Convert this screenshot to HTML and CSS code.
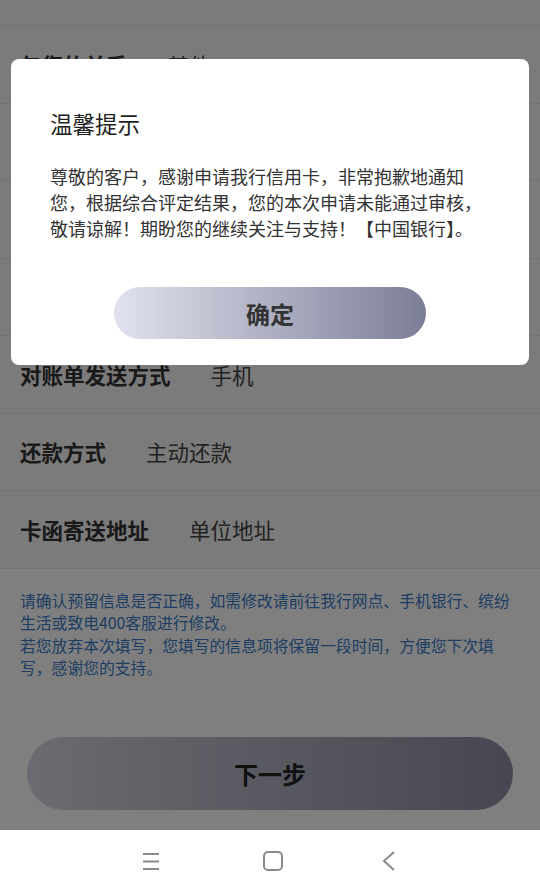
FILE: index.html
```html
<!DOCTYPE html>
<html lang="zh-CN">

<head>
    <meta charset="UTF-8">
    <meta name="viewport" content="width=device-width, initial-scale=1.0">
    <title>信用卡申请</title>
    <link rel="stylesheet" href="styles.css">
</head>

<body>
    <div class="screen">
        <div class="content">
            <div class="info-list">
                <div class="info-row info-row-top"></div>
                <div class="info-row">
                    <span class="info-label">与您的关系</span>
                    <span class="info-value">其他</span>
                </div>
                <!-- rows hidden behind the dialog -->
                <div class="info-row"></div>
                <div class="info-row"></div>
                <div class="info-row"></div>
                <div class="info-row">
                    <span class="info-label">对账单发送方式</span>
                    <span class="info-value">手机</span>
                </div>
                <div class="info-row">
                    <span class="info-label">还款方式</span>
                    <span class="info-value">主动还款</span>
                </div>
                <div class="info-row">
                    <span class="info-label">卡函寄送地址</span>
                    <span class="info-value">单位地址</span>
                </div>
            </div>

            <div class="notice">
                <p>请确认预留信息是否正确，如需修改请前往我行网点、手机银行、缤纷生活或致电400客服进行修改。</p>
                <p>若您放弃本次填写，您填写的信息项将保留一段时间，方便您下次填写，感谢您的支持。</p>
            </div>

            <div class="next-wrap">
                <button class="btn-next">下一步</button>
            </div>
        </div>

        <div class="mask"></div>

        <div class="dialog">
            <h2 class="dialog-title">温馨提示</h2>
            <p class="dialog-text">尊敬的客户，感谢申请我行信用卡，非常抱歉地通知<br>您，根据综合评定结果，您的本次申请未能通过审核，<br>敬请谅解！期盼您的继续关注与支持！【中国银行】。</p>
            <div class="dialog-actions">
                <button class="btn-confirm">确定</button>
            </div>
        </div>
    </div>

    <div class="nav-bar">
        <svg class="nav-icon nav-menu" width="20" height="20" viewBox="0 0 20 20">
            <path d="M2 3h16M2 10.5h16M2 18h16" stroke="#8a8a8a" stroke-width="2" fill="none" />
        </svg>
        <svg class="nav-icon" width="22" height="22" viewBox="0 0 22 22">
            <rect x="2" y="2" width="18" height="18" rx="4" stroke="#8a8a8a" stroke-width="2" fill="none" />
        </svg>
        <svg class="nav-icon nav-back" width="20" height="20" viewBox="0 0 20 20">
            <path d="M15 1L5 10l10 9" stroke="#8a8a8a" stroke-width="2" fill="none" />
        </svg>
    </div>
</body>

</html>
```

FILE: styles.css
```css
body {
    font-family: "Noto Sans CJK SC", "Noto Sans", sans-serif;
    margin: 0;
    padding: 0;
    background-color: #fff;
    color: #333;
}

.screen {
    position: relative;
    height: 830px;
    overflow: hidden;
}

.content {
    height: 100%;
    background-color: #fff;
}

.info-list {
    background-color: #f6f6f6;
}

.info-row {
    display: flex;
    align-items: center;
    height: 76.5px;
    padding: 0 20px;
    border-bottom: 1px solid #e8e8e8;
    font-size: 21.5px;
}

.info-row-top {
    height: 25px;
}

.info-label {
    font-weight: bold;
    color: #333;
    margin-right: 40px;
}

.info-value {
    color: #444;
}

.notice {
    padding: 21px 20px 0;
    font-size: 15.8px;
    line-height: 22.5px;
    color: #3a7ac6;
}

.notice p {
    margin: 0;
}

.next-wrap {
    padding: 57px 27px 0;
}

.btn-next {
    display: block;
    width: 100%;
    height: 73px;
    border: none;
    border-radius: 37px;
    background: linear-gradient(to right, #d6d7e2, #8c8ea0);
    font-family: inherit;
    font-size: 24px;
    font-weight: bold;
    color: #222;
}

.mask {
    position: absolute;
    top: 0;
    left: 0;
    right: 0;
    bottom: 0;
    background-color: rgba(0, 0, 0, 0.5);
}

.dialog {
    position: absolute;
    top: 59px;
    left: 11px;
    right: 11px;
    height: 306px;
    box-sizing: border-box;
    padding: 48px 39px 0;
    background-color: #fff;
    border-radius: 8px;
}

.dialog-title {
    margin: 0;
    font-size: 22.5px;
    font-weight: normal;
    line-height: 32px;
    color: #222;
}

.dialog-text {
    margin: 24px 0 0;
    font-size: 18px;
    line-height: 26px;
    color: #333;
    white-space: nowrap;
}

.dialog-actions {
    display: flex;
    justify-content: center;
    margin-top: 46px;
}

.btn-confirm {
    width: 312px;
    height: 52px;
    border: none;
    border-radius: 26px;
    background: linear-gradient(to right, #e1e2ee, #7b7e97);
    font-family: inherit;
    font-size: 24px;
    font-weight: bold;
    color: #333;
}

.nav-bar {
    display: flex;
    justify-content: center;
    align-items: center;
    gap: 98px;
    height: 62px;
    background-color: #fff;
}

.nav-menu {
    margin-right: 3px;
}

.nav-back {
    margin-left: -3px;
}
```
